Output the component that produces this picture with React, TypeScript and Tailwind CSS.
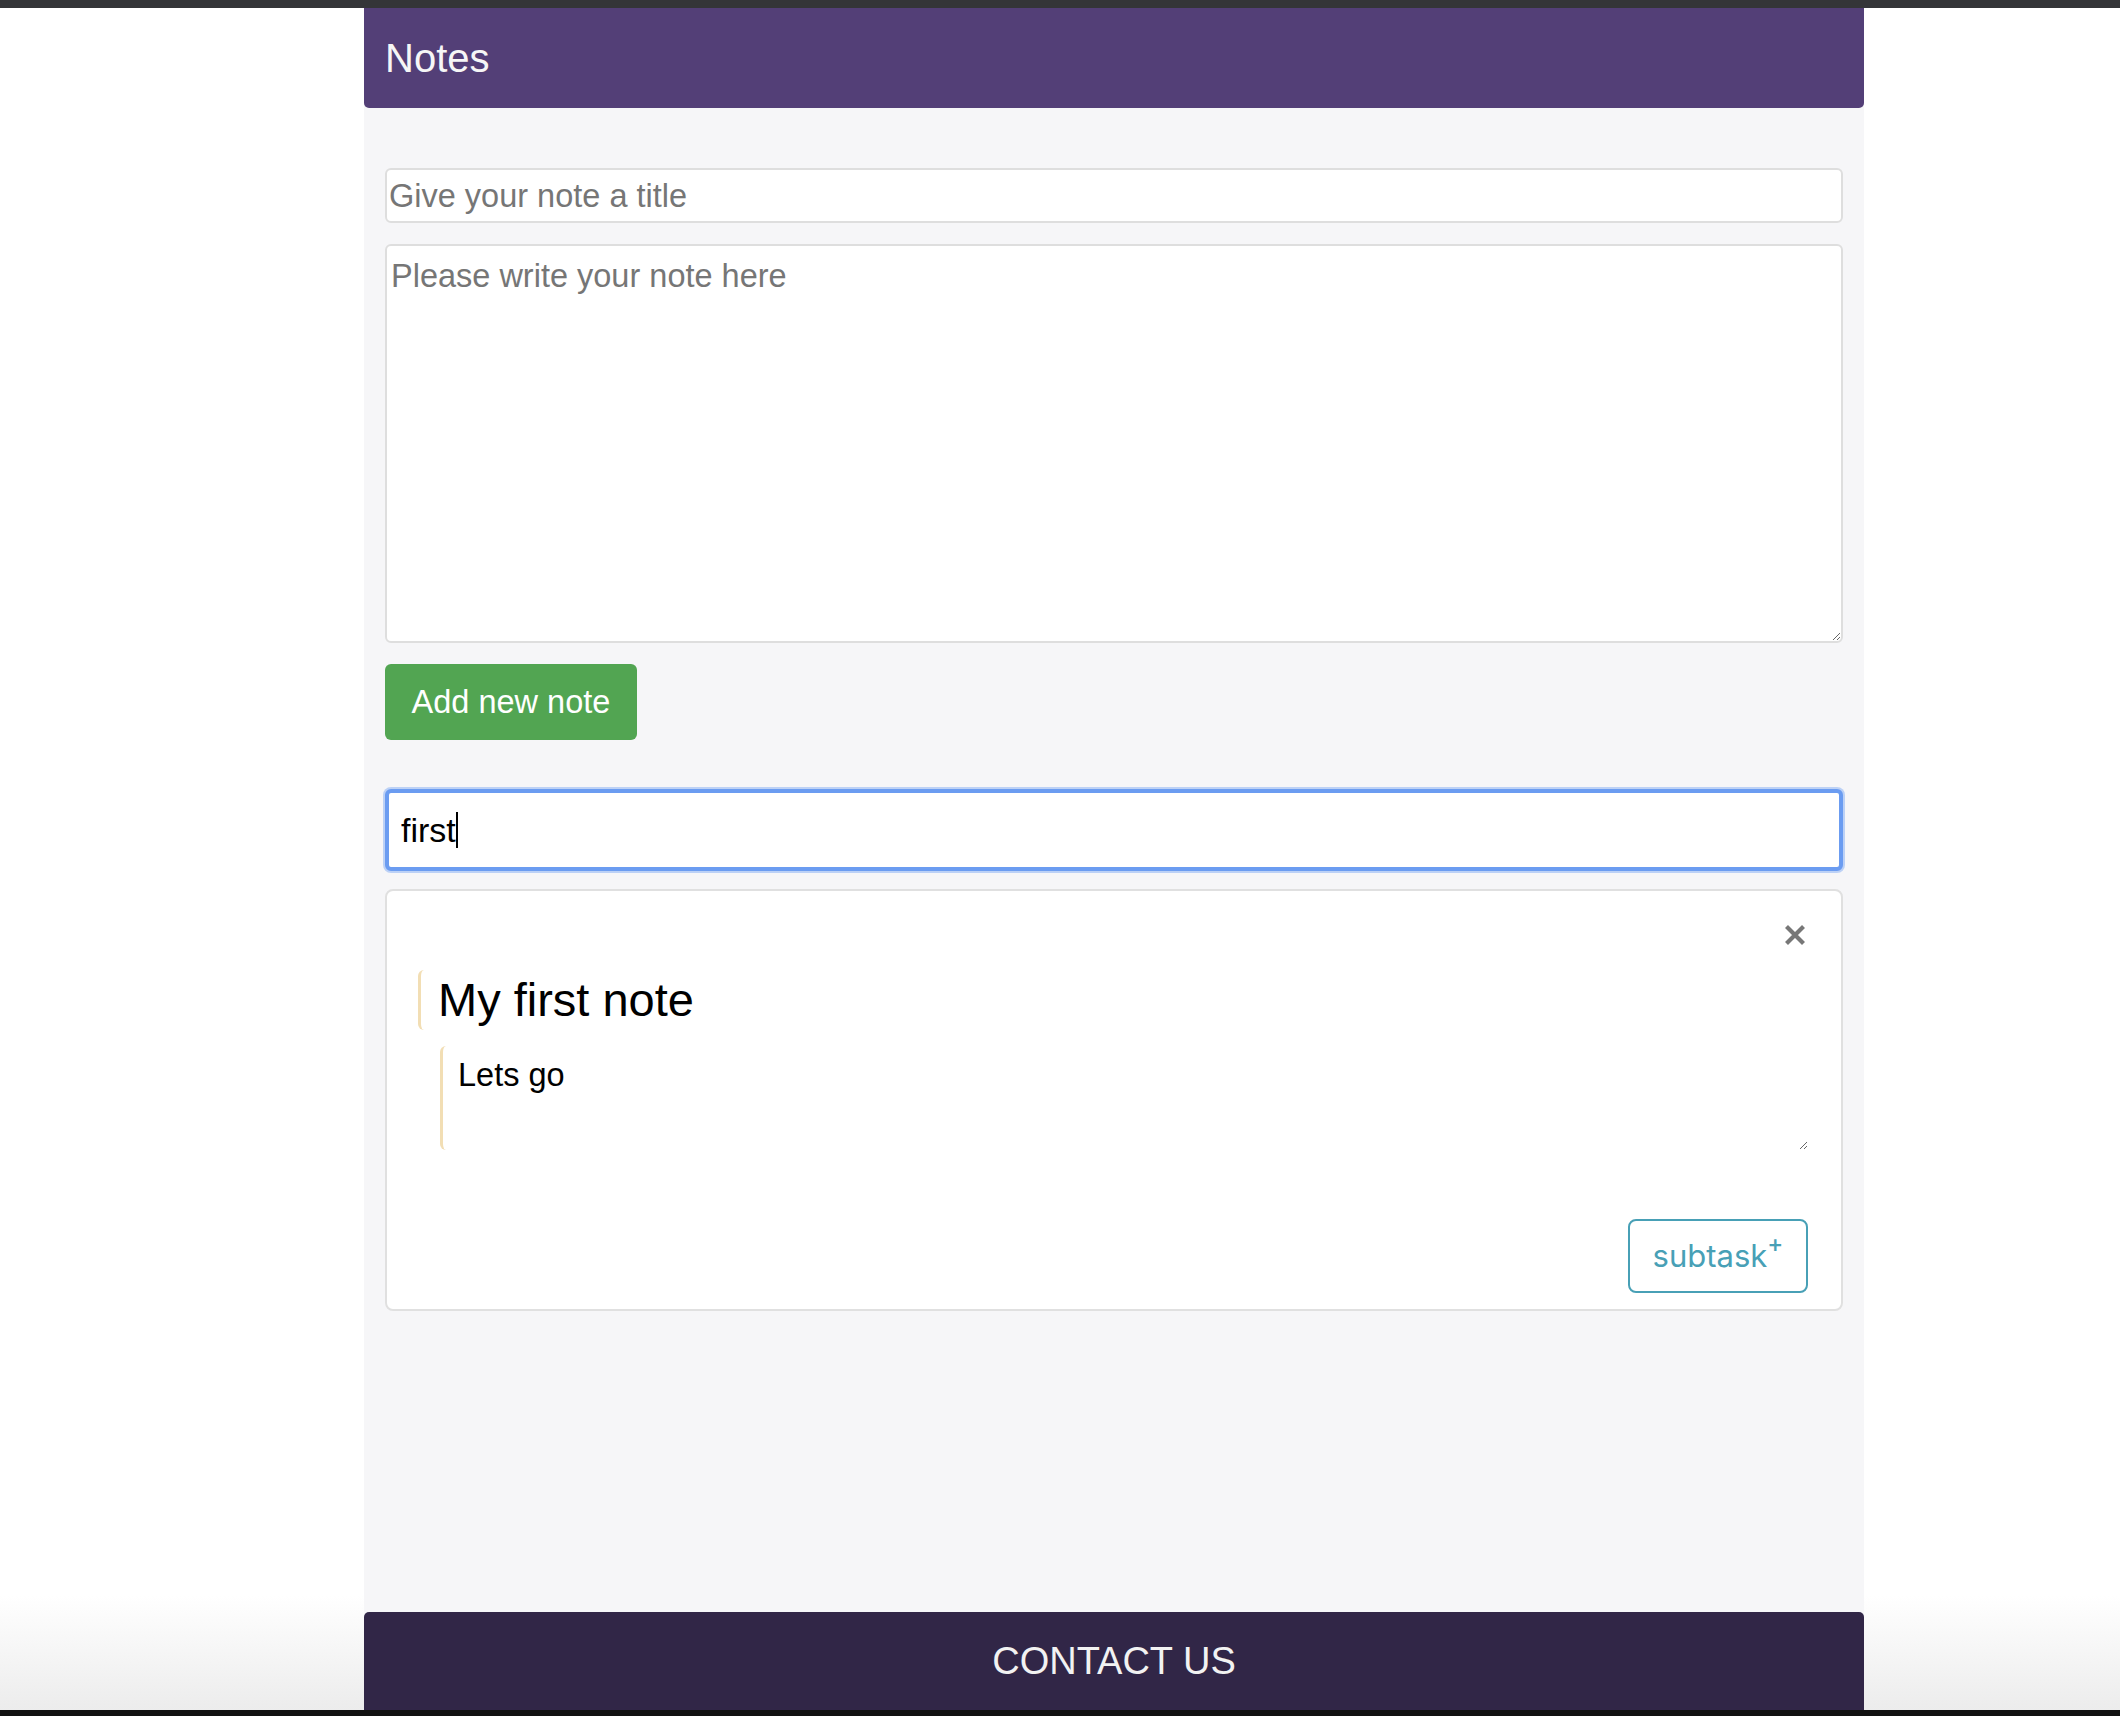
import React from "react";

const sans = "font-['Liberation_Sans',Arial,sans-serif]";

function CloseIcon() {
  return (
    <svg width="22" height="22" viewBox="0 0 22 22" aria-hidden="true">
      <path d="M2.5 2.5 L19.5 19.5 M19.5 2.5 L2.5 19.5" stroke="#777777" strokeWidth="4.2" strokeLinecap="butt" />
    </svg>
  );
}

function NoteCard() {
  return (
    <article className="mt-[18px] flex flex-col rounded-[8px] border-2 border-[#e0e0e0] bg-white pl-[31px] pr-[33px] pt-[33px] pb-[16px]">
      <div className="flex justify-end pr-[2px]">
        <button type="button" className="h-[22px] w-[22px]">
          <CloseIcon />
        </button>
      </div>
      <input
        defaultValue="My first note"
        className={`mt-[24px] h-[60px] w-full rounded-l-[6px] border-0 border-l-[3px] border-[#f2deb4] bg-transparent pl-[17px] text-[47px] text-black outline-none ${sans}`}
      />
      <textarea
        defaultValue="Lets go"
        className={`ml-[22px] mt-[16px] h-[104px] resize-y rounded-l-[6px] border-0 border-l-[3px] border-[#f2deb4] bg-transparent pl-[15px] pt-[10px] text-[32.5px] leading-[38px] text-black outline-none ${sans}`}
      />
      <button
        type="button"
        className="mt-[69px] flex h-[74px] w-[180px] items-center justify-center self-end rounded-[8px] border-2 border-[#48a0b6] font-['Inter',sans-serif] text-[31px] text-[#48a0b6]"
      >
        subtask<sup className="-top-[12px] text-[24px] font-medium">+</sup>
      </button>
    </article>
  );
}

export default function App() {
  return (
    <div className={`flex h-screen flex-col overflow-hidden bg-[linear-gradient(to_bottom,#ffffff_93%,#ebebeb)] ${sans}`}>
      <div className="h-2 bg-[#343538]" />
      <div className="flex flex-1 pl-[364px]">
        <div className="flex w-[1500px] flex-col bg-[#f6f6f8]">
          <header className="flex h-[100px] items-center rounded-b-[5px] bg-[#533f77] px-[21px]">
            <h1 className="text-[40px] text-[#f6f6f6]">Notes</h1>
          </header>

          <main className="flex flex-1 flex-col px-[21px] pt-[60px]">
            <input
              placeholder="Give your note a title"
              className="h-[55px] w-full rounded-[6px] border-2 border-[#dedede] bg-white pl-[2px] pt-[2px] text-[32.5px] outline-none placeholder:text-[#767676]"
            />
            <textarea
              placeholder="Please write your note here"
              className="mt-[21px] h-[399px] w-full rounded-[6px] border-2 border-[#dedede] bg-white pl-[4px] pt-[11px] text-[32.5px] leading-[38px] outline-none placeholder:text-[#767676]"
            />
            <button
              type="button"
              className="mt-[21px] h-[76px] w-[252px] rounded-[6px] bg-[#52a552] text-[32.5px] text-white"
            >
              Add new note
            </button>

            <div className="mt-[49px] flex h-[82px] w-full items-center rounded-[6px] border-4 border-[#6b9cf1] bg-white pl-[12px] shadow-[0_0_0_2px_#bcd1f6]">
              <input
                defaultValue="first"
                size={5}
                className="w-auto bg-transparent text-[34px] text-black outline-none field-sizing-content"
              />
              <span className="h-[36px] w-[2px] bg-black" />
            </div>

            <NoteCard />
          </main>

          <footer className="flex h-[98px] items-center justify-center rounded-t-[5px] bg-[#312647]">
            <span className="text-[38px] text-[#f2f2f2]">CONTACT US</span>
          </footer>
        </div>
      </div>
      <div className="h-[6px] bg-[#111111]" />
    </div>
  );
}
